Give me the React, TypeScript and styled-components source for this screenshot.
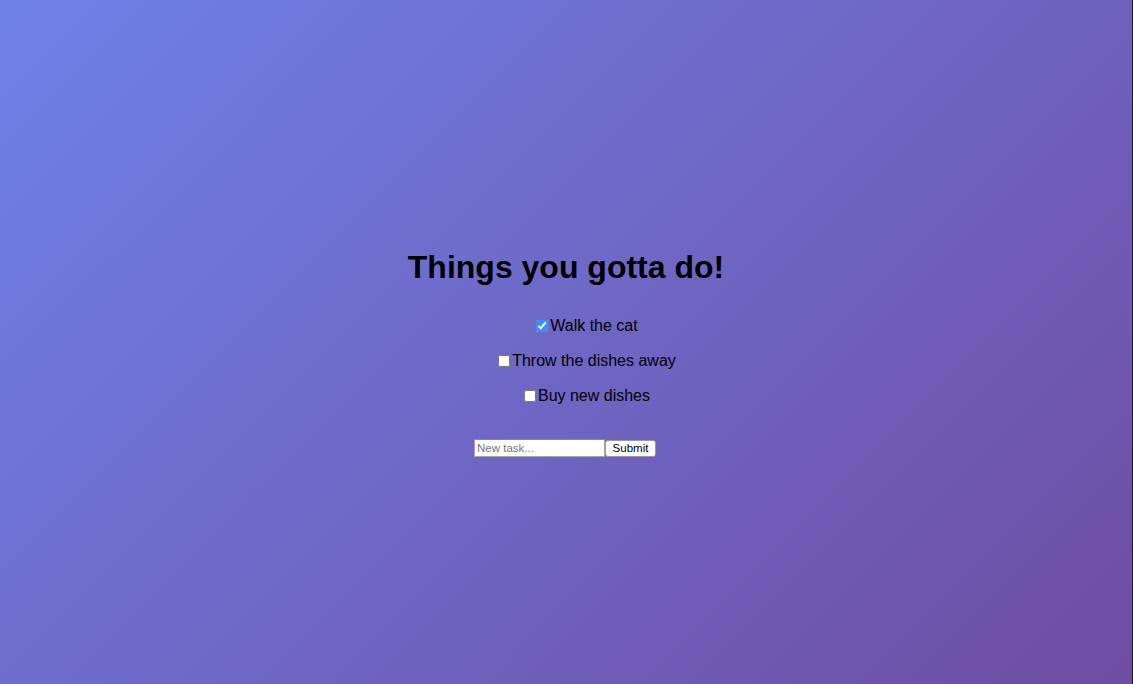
import React from 'react'
import styled, { createGlobalStyle } from 'styled-components'

const GlobalStyle = createGlobalStyle`
  html, body {
    margin: 0;
    padding: 0;
    height: 100%;
  }
  body {
    font-family: 'Liberation Sans', Arial, sans-serif;
    background: linear-gradient(135deg, #6f81e8 0%, #6e4da2 100%);
    min-height: 100vh;
    overflow: hidden;
  }
`

const Page = styled.main`
  height: 684px;
  box-sizing: border-box;
  border-right: 1px solid #1a1a24;
  display: flex;
  flex-direction: column;
  align-items: center;
  padding-top: 249px;
`

const Title = styled.h1`
  margin: 0 0 22px;
  font-size: 32px;
  font-weight: bold;
  line-height: 37px;
  color: #000;
`

const TaskList = styled.ul`
  list-style: none;
  margin: 0;
  padding: 0 0 0 40px;
  display: flex;
  flex-direction: column;
  align-items: center;
`

const Task = styled.li`
  height: 35px;
  display: flex;
  align-items: center;
  font-size: 16px;
  color: #000;
  padding-left: 2px;

  input {
    margin: 1px 2px 0 0;
    width: 12px;
    height: 12px;
    accent-color: #3f8ef5;
  }
`

const TaskForm = styled.form`
  margin-top: 26px;
  display: flex;
  align-items: center;
  margin-right: 2px;
`

const TaskInput = styled.input`
  width: 131px;
  height: 18px;
  box-sizing: border-box;
  border: 1px solid #a6a6a6;
  border-top-color: #8a8a8a;
  background: #fff;
  font-family: 'Liberation Sans', Arial, sans-serif;
  font-size: 11.5px;
  padding: 0 2px;
  outline: none;

  &::placeholder {
    color: #767676;
  }
`

const SubmitButton = styled.button`
  width: 51px;
  height: 17px;
  box-sizing: border-box;
  border: 1px solid #9a9a9a;
  border-radius: 3px;
  background: #fff;
  font-family: 'Liberation Sans', Arial, sans-serif;
  font-size: 11.5px;
  color: #000;
  padding: 0;
  line-height: 15px;
`

const tasks = [
  { label: 'Walk the cat', done: true },
  { label: 'Throw the dishes away', done: false },
  { label: 'Buy new dishes', done: false },
]

const App: React.FC = () => {
  return (
    <>
      <GlobalStyle />
      <Page>
        <Title>Things you gotta do!</Title>
        <TaskList>
          {tasks.map((t) => (
            <Task key={t.label}>
              <input type='checkbox' defaultChecked={t.done} />
              {t.label}
            </Task>
          ))}
        </TaskList>
        <TaskForm onSubmit={(e) => e.preventDefault()}>
          <TaskInput placeholder='New task...' />
          <SubmitButton type='submit'>Submit</SubmitButton>
        </TaskForm>
      </Page>
    </>
  )
}

export default App
